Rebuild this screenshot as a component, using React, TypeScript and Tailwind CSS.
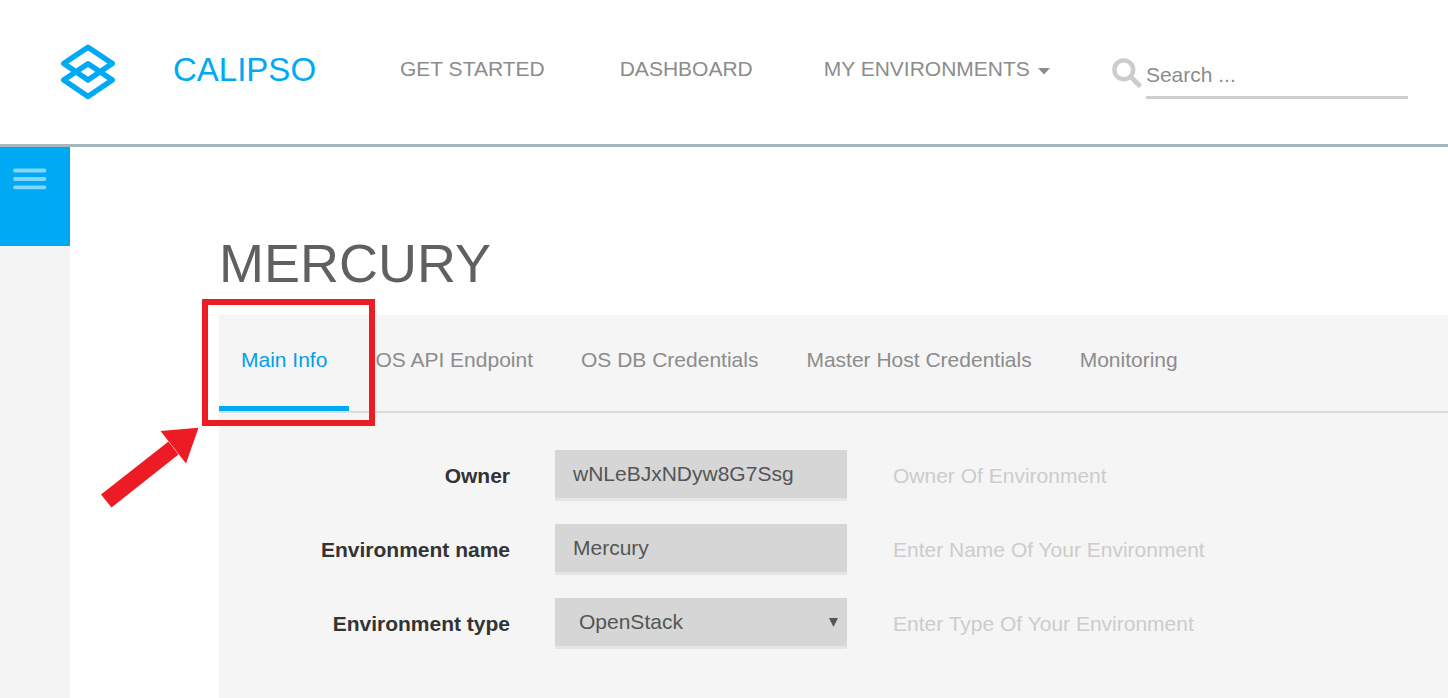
import React from "react";

const tabs = [
  "Main Info",
  "OS API Endpoint",
  "OS DB Credentials",
  "Master Host Credentials",
  "Monitoring",
];

const fieldClass =
  "block h-[51px] w-full appearance-none rounded-none border-b-[3px] border-[#e4e4e9] bg-[#d6d6d6] pb-px text-[#555] outline-none";

function Logo() {
  return (
    <svg
      className="size-14 shrink-0"
      viewBox="0 0 56 56"
      fill="none"
      stroke="#00a9f4"
      strokeWidth="5.4"
      strokeLinejoin="round"
      aria-hidden="true"
    >
      <path d="M28 3.2 L52.3 19.4 L28 36 L3.7 19.4 Z" />
      <path d="M28 19.8 L52.3 36 L28 52.4 L3.7 36 Z" />
    </svg>
  );
}

function Header() {
  return (
    <header className="flex h-[147px] items-center border-b-[3px] border-[#a4b8c0] pr-10 pl-[60px] text-[#8c8c8c]">
      <Logo />
      <a href="#home" className="ml-[57px] w-[227px] shrink-0 pb-1 text-[33px] leading-10 text-[#00a9f4]">
        CALIPSO
      </a>
      <nav className="flex shrink-0 items-center gap-[75px] pb-1.5">
        <a href="#start">GET STARTED</a>
        <a href="#dashboard">DASHBOARD</a>
        <button type="button" className="-ml-1 flex items-center gap-2">
          MY ENVIRONMENTS
          <svg className="mt-1 h-[7px] w-3" viewBox="0 0 12 7" fill="currentColor" aria-hidden="true">
            <path d="M0 0 H12 L6 6.5 Z" />
          </svg>
        </button>
      </nav>
      <form className="ml-[62px] flex min-w-0 flex-1 items-center gap-1 pt-2" onSubmit={(e) => e.preventDefault()}>
        <label htmlFor="search" aria-label="Search" className="pb-1.5">
          <svg className="size-[30px]" viewBox="0 0 30 30" fill="none" stroke="#ccc" aria-hidden="true">
            <circle cx="11.8" cy="11.8" r="9.4" strokeWidth="4.4" />
            <path d="M18.6 18.6 L27 27" strokeWidth="4.8" strokeLinecap="round" />
          </svg>
        </label>
        <input
          id="search"
          type="search"
          placeholder="Search ..."
          className="h-[46px] min-w-0 flex-1 border-b-[3px] border-[#d0d0d0] outline-none placeholder:text-[#8c8c8c]"
        />
      </form>
    </header>
  );
}

function Sidebar() {
  return (
    <aside className="w-[70px] shrink-0 bg-[#f4f4f4]">
      <button type="button" aria-label="Open menu" className="flex h-[99px] w-full items-start bg-[#00a9f4] pt-5 pl-3">
        <svg className="h-6 w-9" viewBox="0 0 36 24" stroke="#84d5fa" strokeWidth="3.8" strokeLinecap="round" aria-hidden="true">
          <path d="M3 3.5 H32.5 M3 12 H32.5 M3 20.3 H32.5" />
        </svg>
      </button>
    </aside>
  );
}

function Row({ id, label, hint, children }: { id: string; label: string; hint: string; children: React.ReactNode }) {
  return (
    <div className="flex items-center">
      <label htmlFor={id} className="w-[291px] shrink-0 text-right font-bold text-[#333]">
        {label}
      </label>
      <div className="relative ml-[45px] w-[292px] shrink-0">{children}</div>
      <p className="ml-[46px] text-[#ccc]">{hint}</p>
    </div>
  );
}

function Callout() {
  return (
    <div className="pointer-events-none absolute" aria-hidden="true">
      <div className="absolute -top-4 -left-[17px] h-[127px] w-[173px] border-[6px] border-[#ed1c24]" />
      <svg className="absolute top-[112px] -left-[119px] h-[82px] w-[100px]" viewBox="0 0 100 82" fill="#ed1c24">
        <path d="M1 67.5 L68.5 14.5 L78.5 27.5 L11.5 80.5 Z" />
        <path d="M60.5 4 L98.5 0.7 L86 36.5 Z" />
        <path d="M68.5 14.3 L78.7 27.3" stroke="#f59a9e" strokeWidth="0.5" />
      </svg>
    </div>
  );
}

export default function App() {
  return (
    <div className="flex min-h-screen flex-col overflow-x-hidden bg-white font-['Liberation_Sans',Arial,sans-serif] text-[21px] leading-6">
      <Header />
      <div className="flex flex-1">
        <Sidebar />
        <main className="flex min-w-0 flex-1 flex-col pt-[84px] pl-[149px]">
          <h1 className="text-[54px] leading-[64px] text-[#606060]">MERCURY</h1>
          <section className="relative mt-5 flex-1 bg-[#f5f5f5]">
            <Callout />
            <div role="tablist" className="flex h-[98px] gap-1 border-b-2 border-[#dcdcdc]">
              {tabs.map((tab, i) => (
                <button
                  key={tab}
                  type="button"
                  role="tab"
                  aria-selected={i === 0}
                  className={
                    i === 0
                      ? "shrink-0 border-b-[5px] border-[#00a9f4] px-[22px] pb-0.5 text-[#00a0ec]"
                      : "shrink-0 border-b-[5px] border-transparent px-[22px] pb-0.5 text-[#8c8c8c]"
                  }
                >
                  {tab}
                </button>
              ))}
            </div>
            <form className="flex flex-col gap-[23px] pt-[37px] pb-12" onSubmit={(e) => e.preventDefault()}>
              <Row id="owner" label="Owner" hint="Owner Of Environment">
                <input id="owner" className={`${fieldClass} px-[18px]`} defaultValue="wNLeBJxNDyw8G7Ssg" />
              </Row>
              <Row id="name" label="Environment name" hint="Enter Name Of Your Environment">
                <input id="name" className={`${fieldClass} px-[18px]`} defaultValue="Mercury" />
              </Row>
              <Row id="type" label="Environment type" hint="Enter Type Of Your Environment">
                <select id="type" className={`${fieldClass} px-6`} defaultValue="OpenStack">
                  <option>OpenStack</option>
                </select>
                <svg
                  className="pointer-events-none absolute top-5 right-[9px] h-[9px] w-[9px]"
                  viewBox="0 0 9 9"
                  fill="#555"
                  aria-hidden="true"
                >
                  <path d="M0 0 H9 L4.5 9 Z" />
                </svg>
              </Row>
            </form>
          </section>
        </main>
      </div>
    </div>
  );
}
